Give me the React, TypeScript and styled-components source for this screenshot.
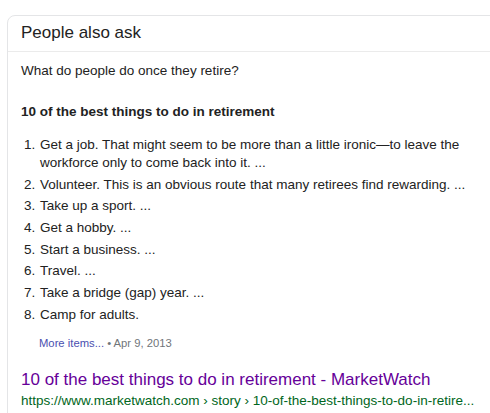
import React from "react";
import styled, { createGlobalStyle } from "styled-components";

const Global = createGlobalStyle`
  html, body { margin: 0; padding: 0; background: #fff; overflow: hidden; }
  body { font-family: "Liberation Sans", Arial, sans-serif; color: #222; }
`;

const Card = styled.div`
  margin: 15px 0 0 7px;
  width: 560px;
  height: 420px;
  border: 1px solid #e4e5e7;
  border-radius: 8px;
  box-sizing: border-box;
`;

const Header = styled.div`
  height: 36px;
  box-sizing: border-box;
  padding: 7px 0 0 13px;
  font-size: 17px;
  line-height: 20px;
  color: #222;
  border-bottom: 1px solid #ebebeb;
`;

const Body = styled.div`
  padding: 7px 0 0 13px;
`;

const Question = styled.div`
  font-size: 13.5px;
  line-height: 24px;
  color: #222;
`;

const Heading = styled.div`
  margin-top: 20px;
  font-size: 13.5px;
  font-weight: bold;
  line-height: 18px;
  color: #222;
`;

const List = styled.ol`
  margin: 15px 0 0 0;
  padding: 0 0 0 18px;
  width: 445px;
  font-size: 13.5px;
  line-height: 18px;
  color: #222;
`;

const Item = styled.li`
  padding-left: 1px;
  margin-bottom: 3.7px;
`;

const Meta = styled.div`
  margin: 12px 0 0 18px;
  font-size: 11.25px;
  line-height: 14px;
  color: #70757a;
`;

const MoreLink = styled.span`
  color: #4a4fb0;
`;

const Result = styled.div`
  margin-top: 19px;
`;

const Title = styled.div`
  font-size: 17px;
  line-height: 22px;
  color: #660099;
`;

const Url = styled.div`
  margin-top: 1px;
  font-size: 13.5px;
  line-height: 18px;
  color: #006621;
`;

const items = [
  "Get a job. That might seem to be more than a little ironic\u2014to leave the workforce only to come back into it. ...",
  "Volunteer. This is an obvious route that many retirees find rewarding. ...",
  "Take up a sport. ...",
  "Get a hobby. ...",
  "Start a business. ...",
  "Travel. ...",
  "Take a bridge (gap) year. ...",
  "Camp for adults.",
];

export default function App() {
  return (
    <>
      <Global />
      <Card>
        <Header>People also ask</Header>
        <Body>
          <Question>What do people do once they retire?</Question>
          <Heading>10 of the best things to do in retirement</Heading>
          <List>
            {items.map((t) => (
              <Item key={t}>{t}</Item>
            ))}
          </List>
          <Meta>
            <MoreLink>More items...</MoreLink> • Apr 9, 2013
          </Meta>
          <Result>
            <Title>10 of the best things to do in retirement - MarketWatch</Title>
            <Url>https://www.marketwatch.com › story › 10-of-the-best-things-to-do-in-retire...</Url>
          </Result>
        </Body>
      </Card>
    </>
  );
}
